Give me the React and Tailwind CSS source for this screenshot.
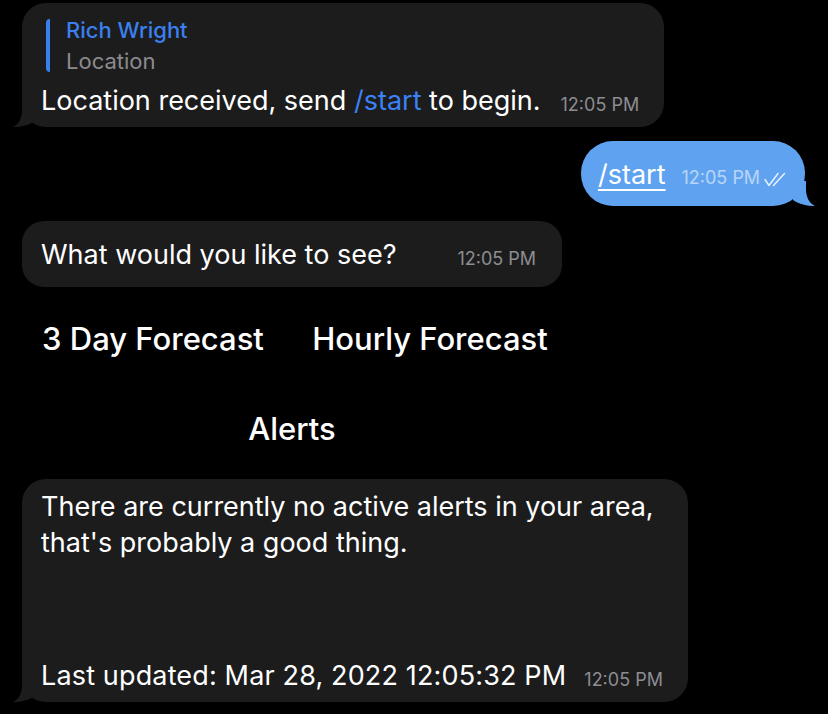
import React from 'react';

const FONT = { fontFamily: 'Inter, "Noto Sans", "Liberation Sans", sans-serif' };

// left-side bubble tail, sits at the bottom-left corner
const TailLeft = ({ color }) => (
    <svg className="absolute -left-[9px] bottom-0" width="30" height="25" viewBox="0 0 30 25">
        <path d="M9 0 L9 8 C9 16 6 22 0 25 C8 25 16 23 22 19 L24 0 Z" fill={color} />
    </svg>
);

const TailRight = ({ color }) => (
    <svg className="absolute -right-[10px] bottom-0" width="30" height="25" viewBox="0 0 30 25">
        <path d="M21 0 L21 8 C21 16 24 22 30 25 C22 25 14 23 8 19 L6 0 Z" fill={color} />
    </svg>
);

const Time = ({ children, className = '' }) => (
    <span className={`text-[18px] leading-none text-[#8d8d92] whitespace-nowrap ${className}`}>{children}</span>
);

const DoubleCheck = () => (
    <svg width="22" height="15" viewBox="0 0 22 15" fill="none" stroke="rgba(255,255,255,0.85)" strokeWidth="1.5" strokeLinecap="round" strokeLinejoin="round">
        <path d="M1 7.5 L5 13.5 L14 1.5" />
        <path d="M9.5 13.5 L20.5 1.5" />
    </svg>
);

export default function App() {
    return (
        <div className="w-[828px] h-[714px] bg-black overflow-hidden text-white" style={FONT}>
            <div className="flex flex-col pt-[3px]">
                {/* location reply */}
                <div className="relative ml-[22px] w-[642px] h-[124px] bg-[#1c1c1d] rounded-[24px]">
                    <TailLeft color="#1c1c1d" />
                    <div className="flex flex-col pt-[16px] pl-[24px]">
                        <div className="flex border-l-[4px] border-[#3a7ff0] rounded-sm pl-[16px] h-[53px] flex-col justify-center">
                            <div className="text-[22px] leading-[31px] font-medium text-[#3a80ef]">Rich Wright</div>
                            <div className="text-[22px] leading-[31px] text-[#8b8b8f]">Location</div>
                        </div>
                        <div className="flex items-end mt-[13px]">
                            <span className="text-[27px] leading-[32px] -ml-[5px]">
                                Location received, send <span className="text-[#3b82f4]">/start</span> to begin.
                            </span>
                            <Time className="ml-[20px] mb-[3px]">12:05 PM</Time>
                        </div>
                    </div>
                </div>

                {/* outgoing /start */}
                <div className="relative self-end mr-[23px] mt-[14px] w-[224px] h-[65px] bg-[#5fa2ef] rounded-[32px]">
                    <TailRight color="#5fa2ef" />
                    <div className="flex items-end h-full pl-[17px] pb-[15px]">
                        <span className="text-[27px] leading-[32px] underline underline-offset-[5px] decoration-[2px]">/start</span>
                        <span className="text-[18px] leading-none text-white/55 ml-[16px] mb-[4px] whitespace-nowrap">12:05 PM</span>
                        <span className="ml-[4px] mb-[4px]"><DoubleCheck /></span>
                    </div>
                </div>

                {/* question */}
                <div className="ml-[22px] mt-[15px] w-[540px] h-[66px] bg-[#1c1c1d] rounded-[22px] flex items-end pl-[19px] pb-[16px]">
                    <span className="text-[27px] leading-[32px]">What would you like to see?</span>
                    <Time className="ml-[61px] mb-[3px]">12:05 PM</Time>
                </div>

                {/* inline keyboard */}
                <div className="ml-[22px] w-[540px] h-[192px] flex flex-col">
                    <div className="grid grid-cols-2 h-[96px] items-center pt-[8px]">
                        <button className="text-[31px] text-white font-medium -ml-[8px]">3 Day Forecast</button>
                        <button className="text-[31px] text-white font-medium ml-[6px]">Hourly Forecast</button>
                    </div>
                    <div className="flex h-[96px] items-center justify-center pb-[4px]">
                        <button className="text-[31px] text-white font-medium">Alerts</button>
                    </div>
                </div>

                {/* alerts reply */}
                <div className="relative ml-[22px] w-[666px] h-[223px] bg-[#1c1c1d] rounded-[24px] flex flex-col justify-between pl-[19px] pt-[10px] pb-[10px]">
                    <TailLeft color="#1c1c1d" />
                    <div className="text-[27px] leading-[36px]">
                        There are currently no active alerts in your area,<br />that's probably a good thing.
                    </div>
                    <div className="flex items-end">
                        <span className="text-[27px] leading-[32px] tracking-[0.15px]">Last updated: Mar 28, 2022 12:05:32 PM</span>
                        <Time className="ml-[18px] mb-[3px]">12:05 PM</Time>
                    </div>
                </div>
            </div>
        </div>
    );
}
